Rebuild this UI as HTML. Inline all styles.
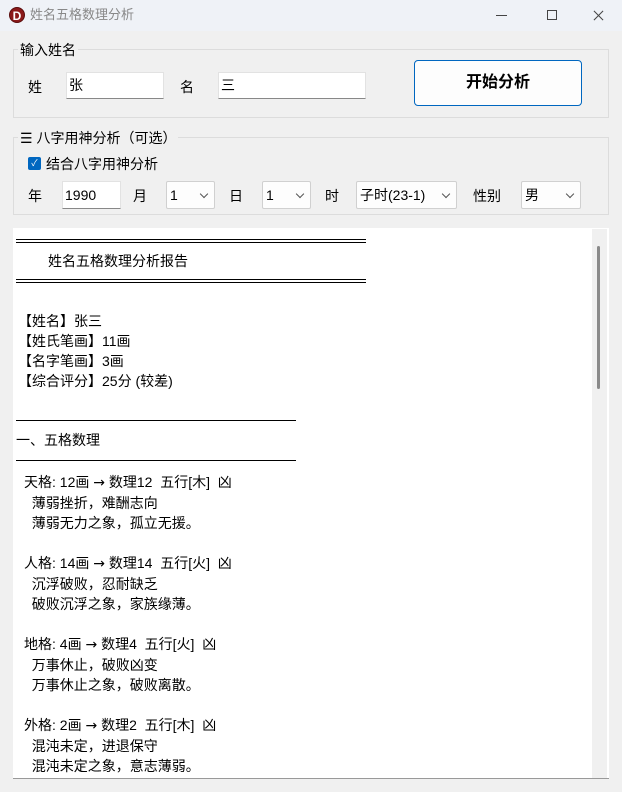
<!DOCTYPE html>
<html><head><meta charset="utf-8"><style>
*{margin:0;padding:0;box-sizing:border-box}
body{width:622px;height:792px;background:#f0f0f0;font-family:"Liberation Sans","Noto Sans CJK SC",sans-serif;font-size:13px;color:#000;position:relative;overflow:hidden}
.a{position:absolute;white-space:pre;line-height:16px}
.box{position:absolute;border:1px solid #dcdcdc}
.inp{position:absolute;background:#fff;border:1px solid #e2e2e2;border-bottom:1px solid #888;padding-left:2px;line-height:24px;font-size:14px}
.sel{position:absolute;background:#fdfdfd;border:1px solid #d0d0d0;border-radius:2px;padding-left:3px;line-height:26px;font-size:14px}
.sel::after{content:"";position:absolute;right:7px;top:9px;width:5px;height:5px;border-right:1px solid #555;border-bottom:1px solid #555;transform:rotate(45deg)}
.hl{position:absolute;height:1px;background:#000}
.r{font-size:14px}
</style></head><body>
<div style="position:absolute;left:0;top:0;width:622px;height:31px;background:#eff2f7"></div>
<div style="position:absolute;left:9px;top:7px;width:16px;height:16px;border-radius:50%;background:#8b1a1a;color:#fff;font-weight:bold;font-size:12px;text-align:center;line-height:16px;border:1px solid #5a0d0d">D</div>
<div class="a" style="left:30px;top:7px;color:#888;font-size:13px">姓名五格数理分析</div>
<div style="position:absolute;left:496px;top:15px;width:11px;height:1px;background:#444"></div>
<div style="position:absolute;left:547px;top:10px;width:10px;height:10px;border:1px solid #444"></div>
<div style="position:absolute;left:592px;top:15px;width:13px;height:1px;background:#444;transform:rotate(45deg)"></div>
<div style="position:absolute;left:592px;top:15px;width:13px;height:1px;background:#444;transform:rotate(-45deg)"></div>

<div class="box" style="left:13px;top:49px;width:596px;height:69px"></div>
<div class="a" style="left:18px;top:42px;background:#f0f0f0;padding:0 2px;font-size:14px">输入姓名</div>
<div class="a" style="left:28px;top:79px;font-size:14px">姓</div>
<div class="inp" style="left:66px;top:72px;width:98px;height:27px">张</div>
<div class="a" style="left:180px;top:79px;font-size:14px">名</div>
<div class="inp" style="left:218px;top:72px;width:148px;height:27px">三</div>
<div style="position:absolute;left:414px;top:60px;width:168px;height:46px;background:#fdfdfd;border:1px solid #0067c0;border-radius:4px;text-align:center;line-height:44px;font-weight:bold;font-size:16px">开始分析</div>

<div class="box" style="left:13px;top:137px;width:596px;height:78px"></div>
<div class="a" style="left:18px;top:130px;background:#f0f0f0;padding:0 2px;font-size:14px">☰ 八字用神分析（可选）</div>
<div style="position:absolute;left:28px;top:157px;width:13px;height:13px;background:#0067c0;border-radius:2px;color:#fff;font-size:9px;text-align:center;line-height:13px">✓</div>
<div class="a" style="left:46px;top:156px;font-size:14px">结合八字用神分析</div>
<div class="a" style="left:28px;top:188px;font-size:14px">年</div>
<div class="inp" style="left:62px;top:181px;width:59px;height:28px;line-height:26px">1990</div>
<div class="a" style="left:133px;top:188px;font-size:14px">月</div>
<div class="sel" style="left:166px;top:181px;width:49px;height:28px">1</div>
<div class="a" style="left:229px;top:188px;font-size:14px">日</div>
<div class="sel" style="left:262px;top:181px;width:49px;height:28px">1</div>
<div class="a" style="left:325px;top:188px;font-size:14px">时</div>
<div class="sel" style="left:356px;top:181px;width:101px;height:28px">子时(23-1)</div>
<div class="a" style="left:473px;top:188px;font-size:14px">性别</div>
<div class="sel" style="left:521px;top:181px;width:60px;height:28px">男</div>

<div style="position:absolute;left:13px;top:228px;width:596px;height:551px;background:#fff;border-bottom:1px solid #999"></div>
<div style="position:absolute;left:592px;top:229px;width:15px;height:549px;background:#f0f0f0"></div>
<div style="position:absolute;left:597px;top:246px;width:3px;height:143px;background:#8a8a8a;border-radius:2px"></div>

<div class="hl" style="left:16px;top:239px;width:350px"></div><div class="hl" style="left:16px;top:242px;width:350px"></div>
<div class="a r" style="left:48px;top:253px">姓名五格数理分析报告</div>
<div class="hl" style="left:16px;top:279px;width:350px"></div><div class="hl" style="left:16px;top:282px;width:350px"></div>
<div class="a r" style="left:18px;top:311px;line-height:20px">【姓名】张三
【姓氏笔画】11画
【名字笔画】3画
【综合评分】25分 (较差)</div>
<div class="hl" style="left:16px;top:420px;width:280px"></div>
<div class="a r" style="left:16px;top:432px">一、五格数理</div>
<div class="hl" style="left:16px;top:460px;width:280px"></div>
<div class="a r" style="left:24px;top:472px;line-height:20px">天格: 12画 <span style="font-family:'DejaVu Sans'">→</span> 数理12  五行[木]  凶
  薄弱挫折，难酬志向
  薄弱无力之象，孤立无援。

人格: 14画 <span style="font-family:'DejaVu Sans'">→</span> 数理14  五行[火]  凶
  沉浮破败，忍耐缺乏
  破败沉浮之象，家族缘薄。

地格: 4画 <span style="font-family:'DejaVu Sans'">→</span> 数理4  五行[火]  凶
  万事休止，破败凶变
  万事休止之象，破败离散。

外格: 2画 <span style="font-family:'DejaVu Sans'">→</span> 数理2  五行[木]  凶
  混沌未定，进退保守
  混沌未定之象，意志薄弱。</div>
</body></html>
